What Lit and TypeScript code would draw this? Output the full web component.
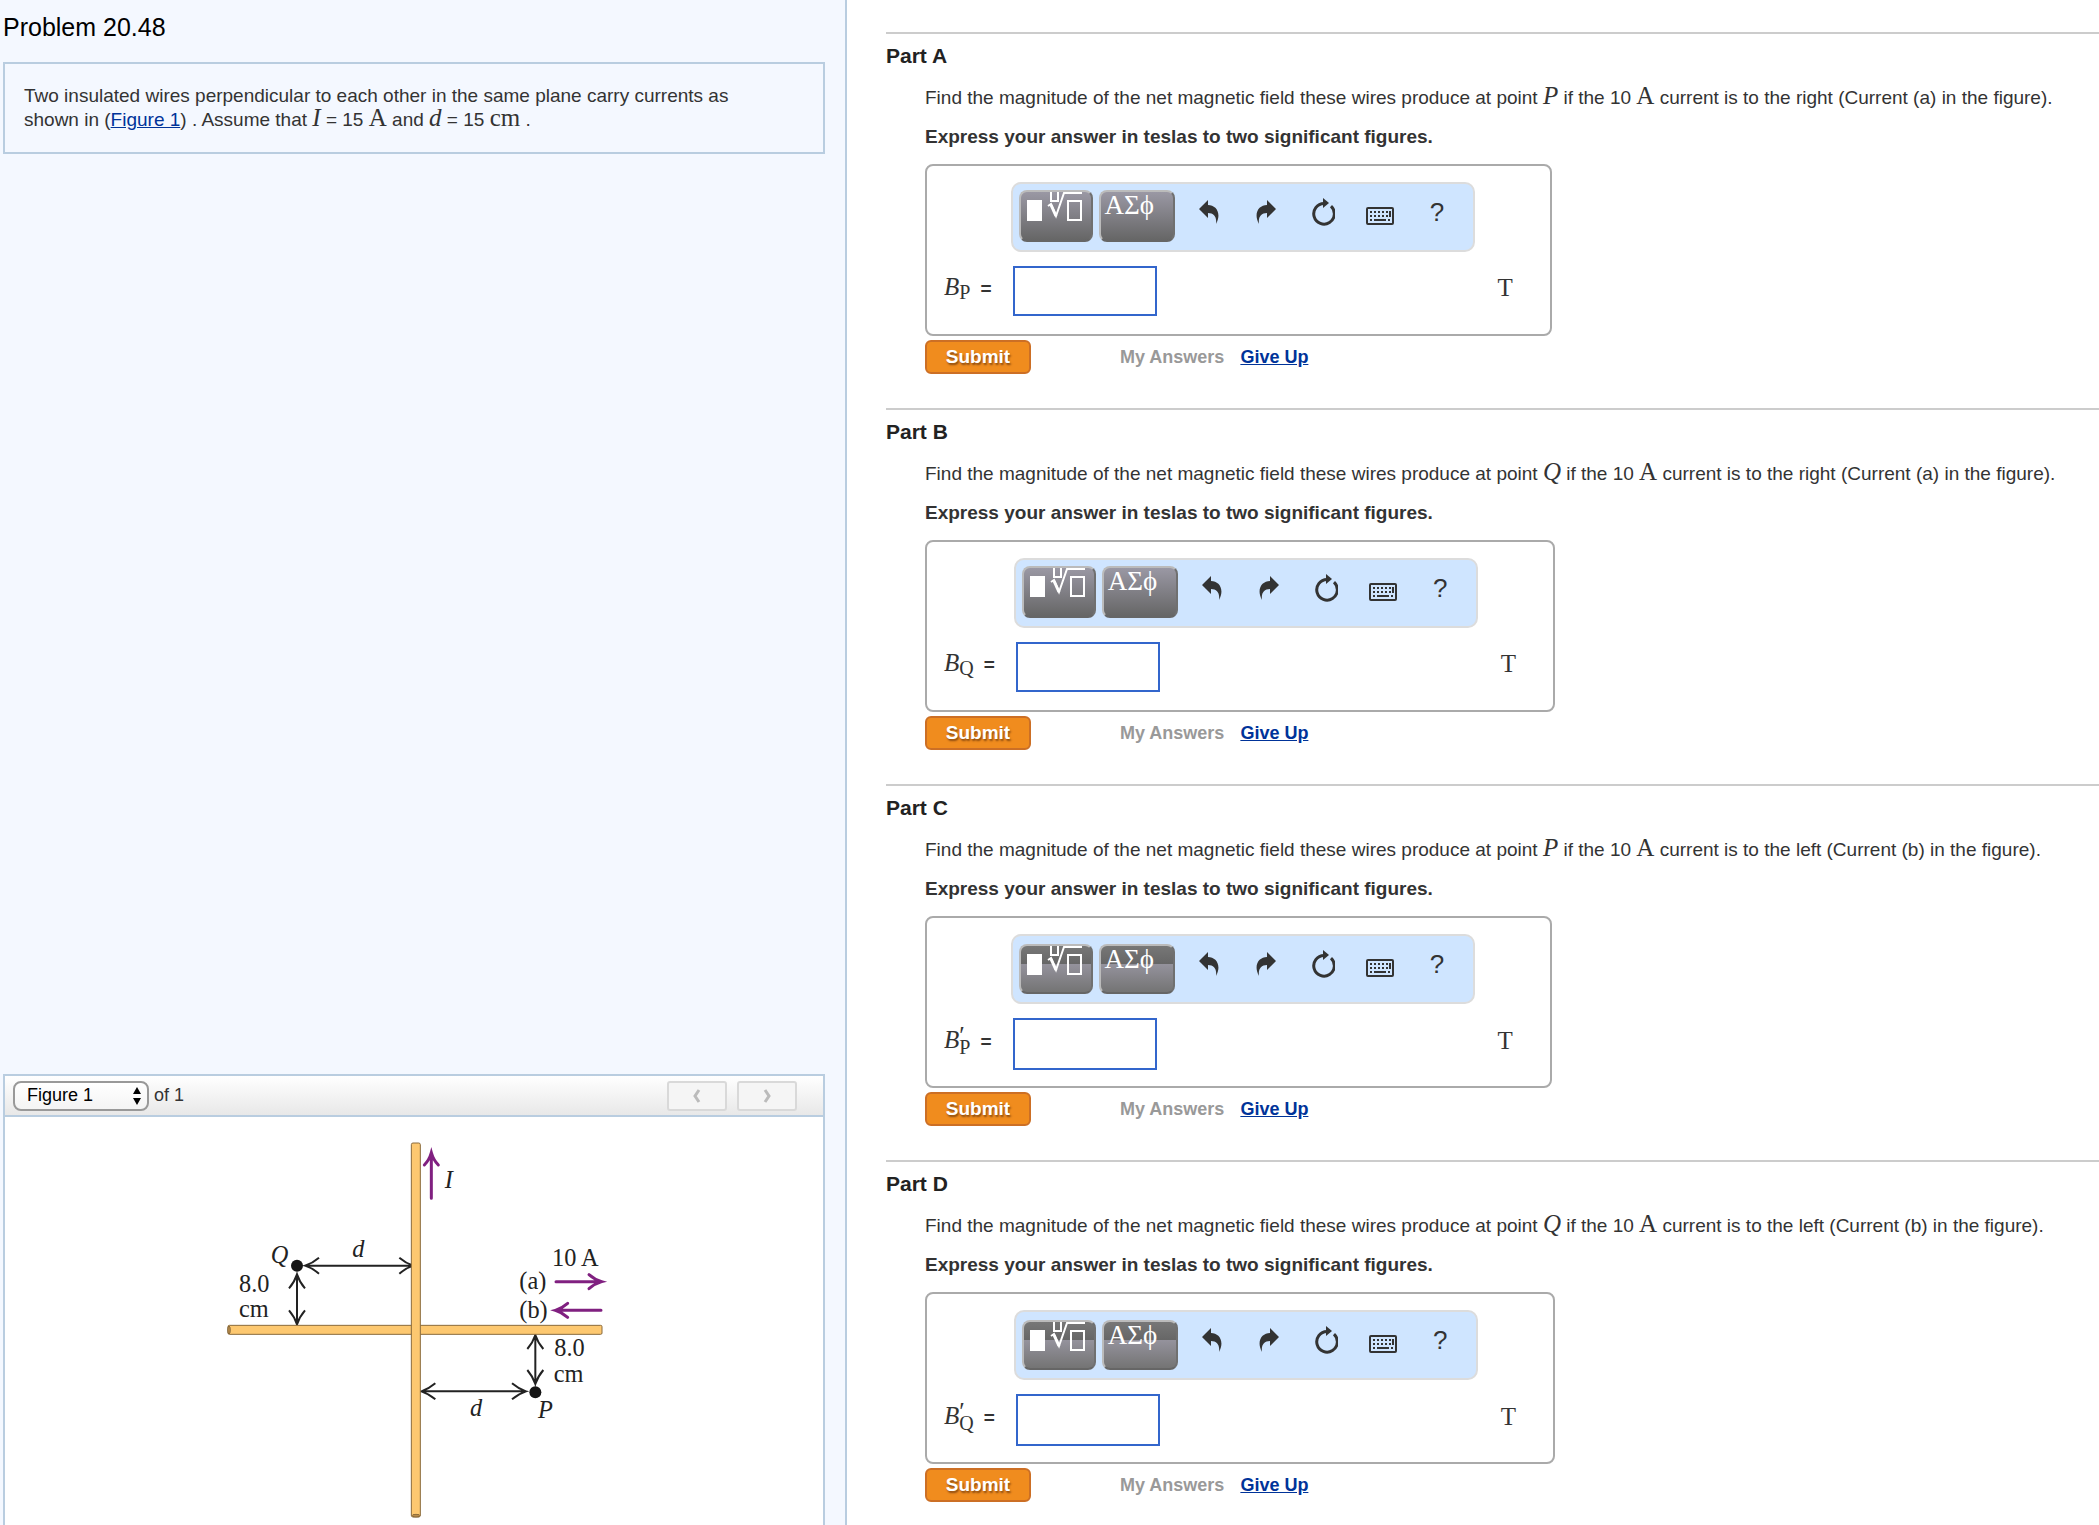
import { LitElement, html, svg, css } from "lit";
import { customElement, property } from "lit/decorators.js";
import { classMap } from "lit/directives/class-map.js";

interface Part {
  id: string;
  point: string;
  prime: boolean;
  direction: string;
  current: string;
}

const PARTS: Part[] = [
  { id: "A", point: "P", prime: false, direction: "right", current: "a" },
  { id: "B", point: "Q", prime: false, direction: "right", current: "a" },
  { id: "C", point: "P", prime: true, direction: "left", current: "b" },
  { id: "D", point: "Q", prime: true, direction: "left", current: "b" },
];

const templatesIcon = html`<svg class="glyph" viewBox="0 0 74 46" width="74" height="46" aria-hidden="true">
  <g transform="translate(0 -2)">
    <rect x="8" y="10" width="15" height="21" fill="#fff" />
    <path d="M32 2V11H39V2M29 16L32 14L37 26L45 3H63" fill="none" stroke="#fff" stroke-width="2" />
    <path d="M32 15L37 26" stroke="#fff" stroke-width="3" />
    <rect x="49" y="11" width="13" height="19" fill="none" stroke="#fff" stroke-width="2" />
  </g>
</svg>`;

const undoIcon = html`<svg viewBox="0 0 24 28" width="24" height="28" aria-hidden="true">
  <path d="M2 11L11 2V7C19 7 25 15 19 26C20 19 17 15 11 15V20Z" fill="#333" />
</svg>`;

const redoIcon = html`<svg viewBox="0 0 24 28" width="24" height="28" aria-hidden="true">
  <path d="M22 11L13 2V7C5 7 -1 15 5 26C4 19 7 15 13 15V20Z" fill="#333" />
</svg>`;

const resetIcon = html`<svg viewBox="0 0 24 28" width="24" height="28" aria-hidden="true">
  <path d="M20 8.200A10.300 10.300 0 1 1 13 5.500" fill="none" stroke="#333" stroke-width="3" />
  <path d="M12 0L18 5L12 10Z" fill="#333" />
</svg>`;

const keyboardIcon = html`<svg viewBox="0 0 28 28" width="28" height="28" aria-hidden="true">
  <rect x="1" y="10" width="26" height="16" rx="1" fill="none" stroke="#333" stroke-width="2" />
  <path d="M4 14H24M4 18H22" fill="none" stroke="#333" stroke-width="2" stroke-dasharray="2 2" />
  <path d="M24 13V19M4 22H6M8 22H20M22 22H24" fill="none" stroke="#333" stroke-width="2" />
</svg>`;

@customElement("answer-part")
class AnswerPart extends LitElement {
  @property({ attribute: false }) part!: Part;

  static styles = css`
    :host {
      display: block;
      border-top: 2px solid #ccc;
      padding: 10px 0 34px;
      color: #333;
    }
    .title {
      margin: 0 0 18px;
      font-size: 21px;
      line-height: 24px;
      color: #222;
    }
    .body {
      padding-left: 39px;
    }
    .text {
      margin: 0 0 15px;
      font-size: 19px;
      line-height: 24px;
    }
    .instruction {
      margin: 0 0 15px;
      font-size: 19px;
      line-height: 24px;
      font-weight: bold;
    }
    .math {
      font-family: "Liberation Serif", serif;
      font-size: 25px;
      line-height: 20px;
    }
    .italic {
      font-style: italic;
    }
    .answer {
      display: grid;
      grid-template-columns: auto auto auto;
      width: fit-content;
      row-gap: 14px;
      align-items: center;
      border: 2px solid #aaa;
      border-radius: 8px;
      padding: 16px 37px 18px 17px;
    }
    .answer.primed {
      padding-bottom: 16px;
    }
    .toolbar {
      grid-column: 2;
      display: flex;
      align-items: flex-start;
      box-sizing: border-box;
      height: 70px;
      width: 464px;
      padding: 6px 6px 0;
      background: #cfe5ff;
      border: 2px solid #dcdcdc;
      border-radius: 10px;
    }
    .palette {
      box-sizing: border-box;
      width: 74px;
      height: 52px;
      margin: 0 6px 0 0;
      padding: 0;
      border: 2px solid;
      border-color: #bbb #707070 #666 #bbb;
      border-radius: 8px;
      background: linear-gradient(#9a98a4, #666);
      color: #fff;
      overflow: hidden;
      display: flex;
      align-items: flex-start;
    }
    .greek {
      width: 76px;
      padding-left: 4px;
      font-family: "Liberation Serif", serif;
      font-size: 27px;
      line-height: 26px;
    }
    .primed .palette {
      height: 50px;
      margin-top: 2px;
      background: linear-gradient(#777 0, #666 40%, #94929c 40%, #747474);
    }
    .glyph {
      flex: none;
      margin-left: -2px;
    }
    .tool {
      width: 57px;
      height: 44px;
      padding: 0;
      border: 0;
      background: none;
      color: #333;
      display: flex;
      align-items: center;
      justify-content: center;
      font-family: "Liberation Sans", Arial, sans-serif;
      font-size: 26px;
    }
    .label {
      grid-column: 1;
      padding: 0 19px 4px 0;
      white-space: nowrap;
      font-size: 19px;
      line-height: 24px;
    }
    .sub {
      font-family: "Liberation Serif", serif;
      font-size: 20px;
      line-height: 12px;
      vertical-align: -4px;
    }
    .primed .sub {
      vertical-align: -6px;
    }
    .prime {
      display: inline-block;
      width: 0;
      font-family: "Liberation Serif", serif;
      font-size: 25px;
      line-height: 12px;
      vertical-align: 4px;
    }
    .equals {
      font-weight: bold;
      margin-left: 10px;
    }
    .field {
      box-sizing: border-box;
      width: 144px;
      height: 50px;
      margin: 0 0 0 2px;
      padding: 0 8px;
      border: 2px solid #36c;
      border-radius: 0;
      background: #fff;
      font-size: 22px;
    }
    .primed .field {
      height: 52px;
    }
    .unit {
      padding: 0 0 6px 23px;
      line-height: 24px;
    }
    .actions {
      display: flex;
      align-items: center;
      margin-top: 4px;
      font-size: 18px;
      line-height: 20px;
      font-weight: bold;
    }
    .submit {
      box-sizing: border-box;
      width: 106px;
      height: 34px;
      margin-right: 89px;
      padding: 0;
      border: 2px solid #cc6f25;
      border-radius: 6px;
      background: #f08c1e;
      color: #fff;
      font-family: "Liberation Sans", Arial, sans-serif;
      font-size: 19px;
      font-weight: bold;
      text-shadow: 1px 2px 2px #8a4a10;
    }
    .muted {
      color: #999;
      margin-right: 16px;
    }
    .link {
      color: #039;
    }
  `;

  render() {
    const { id, point, prime, direction, current } = this.part;
    return html`
      <h2 class="title">Part ${id}</h2>
      <div class="body">
        <p class="text">
          Find the magnitude of the net magnetic field these wires produce at point
          <span class="math italic">${point}</span> if the 10 <span class="math">A</span> current is
          to the ${direction} (Current (${current}) in the figure).
        </p>
        <p class="instruction">Express your answer in teslas to two significant figures.</p>
        <div class=${classMap({ answer: true, primed: prime })}>
          <div class="toolbar" role="toolbar" aria-label="Equation tools">
            <button class="palette" type="button" aria-label="Templates">${templatesIcon}</button>
            <button class="palette greek" type="button">ΑΣϕ</button>
            <button class="tool" type="button" aria-label="Undo">${undoIcon}</button>
            <button class="tool" type="button" aria-label="Redo">${redoIcon}</button>
            <button class="tool" type="button" aria-label="Reset">${resetIcon}</button>
            <button class="tool" type="button" aria-label="Keyboard shortcuts">${keyboardIcon}</button>
            <button class="tool" type="button">?</button>
          </div>
          <label class="label" for="value"
            ><span class="math italic">B</span>${prime ? html`<span class="prime">′</span>` : ""}<span
              class="sub"
              >${point}</span
            ><span class="equals">=</span></label
          >
          <input class="field" id="value" type="text" autocomplete="off" />
          <span class="unit math">T</span>
        </div>
        <div class="actions">
          <button class="submit" type="button">Submit</button>
          <span class="muted">My Answers</span>
          <a class="link" href="#give-up">Give Up</a>
        </div>
      </div>
    `;
  }
}

/* Double-headed dimension line with open arrowheads. */
const dimension = (x1: number, y1: number, x2: number, y2: number) => {
  const across = y1 === y2;
  const heads = across
    ? `M${x1 + 42} ${y1 - 24}Q${x1 + 22} ${y1 - 7} ${x1} ${y1}Q${x1 + 22} ${y1 + 7} ${x1 + 42} ${y1 + 24}
       M${x2 - 42} ${y1 - 24}Q${x2 - 22} ${y1 - 7} ${x2} ${y1}Q${x2 - 22} ${y1 + 7} ${x2 - 42} ${y1 + 24}`
    : `M${x1 - 24} ${y1 + 42}Q${x1 - 7} ${y1 + 22} ${x1} ${y1}Q${x1 + 7} ${y1 + 22} ${x1 + 24} ${y1 + 42}
       M${x1 - 24} ${y2 - 42}Q${x1 - 7} ${y2 - 22} ${x1} ${y2}Q${x1 + 7} ${y2 - 22} ${x1 + 24} ${y2 - 42}`;
  return svg`<path class="dim" d="M${x1} ${y1}L${x2} ${y2}${heads}" />`;
};

@customElement("wire-figure")
class WireFigure extends LitElement {
  static styles = css`
    :host {
      display: block;
    }
    .drawing {
      display: block;
      margin: 0 auto;
    }
    .dim {
      fill: none;
      stroke: #222;
      stroke-width: 6;
    }
    .wire {
      fill: #fdc870;
      stroke: #8a6a3c;
      stroke-width: 3;
    }
    .end {
      fill: #b98d4b;
      stroke: #6e532c;
      stroke-width: 2;
    }
    .current {
      fill: none;
      stroke: #802080;
      stroke-width: 9;
      stroke-linecap: round;
    }
    .words {
      font-family: "Liberation Serif", serif;
      font-size: 73px;
      fill: #222;
    }
    .italic {
      font-style: italic;
    }
  `;

  render() {
    return html`<svg class="drawing" viewBox="-3 0 1290 1185" width="430" height="395" role="img" aria-label="Two perpendicular wires">
      ${dimension(315, 407, 640, 407)} ${dimension(664, 784, 978, 784)}
      ${dimension(291, 433, 291, 583)} ${dimension(1006, 615, 1006, 762)}
      <rect class="wire" x="84" y="586" width="1122" height="27" rx="4" />
      <ellipse class="end" cx="87" cy="600" rx="4" ry="12" />
      <rect class="wire" x="634" y="39" width="27" height="1122" rx="5" />
      <ellipse class="end" cx="648" cy="1157" rx="12" ry="4" />
      <circle cx="291" cy="407" r="18" fill="#151515" />
      <circle cx="1006" cy="787" r="18" fill="#151515" />
      <path class="current" d="M694 205V70M673 105Q688 90 694 68Q700 90 715 105" />
      <path class="current" d="M1068 455H1202M1167 434Q1184 449 1205 455Q1184 461 1167 476" />
      <path class="current" d="M1203 541H1068M1103 520Q1086 535 1066 541Q1086 547 1103 562" />
      <g class="words">
        <text x="117" y="485">8.0</text>
        <text x="117" y="561">cm</text>
        <text x="1056" y="408">10 A</text>
        <text x="958" y="478">(a)</text>
        <text x="958" y="564">(b)</text>
        <text x="1063" y="678">8.0</text>
        <text x="1061" y="756">cm</text>
        <g class="italic">
          <text x="734" y="174">I</text>
          <text x="212" y="398">Q</text>
          <text x="457" y="380">d</text>
          <text x="810" y="857">d</text>
          <text x="1014" y="864">P</text>
        </g>
      </g>
    </svg>`;
  }
}

@customElement("app-root")
class AppRoot extends LitElement {
  static styles = css`
    :host {
      display: grid;
      grid-template-columns: 847px minmax(0, 1fr);
      grid-template-rows: minmax(0, 1fr);
      height: 100vh;
      overflow: hidden;
      background: #fff;
      color: #333;
      font-family: "Liberation Sans", Arial, sans-serif;
    }
    .side {
      box-sizing: border-box;
      min-height: 0;
      display: flex;
      flex-direction: column;
      justify-content: space-between;
      padding: 12px 20px 0 3px;
      background: #f4f8ff;
      border-right: 2px solid #b9cde0;
    }
    .heading {
      margin: 0 0 20px;
      font-size: 25px;
      line-height: 30px;
      font-weight: normal;
      color: #000;
    }
    .statement {
      margin: 0;
      padding: 20px 38px 20px 19px;
      border: 2px solid #b9cde0;
      font-size: 19px;
      line-height: 24px;
    }
    .math {
      font-family: "Liberation Serif", serif;
      font-size: 25px;
      line-height: 20px;
    }
    .italic {
      font-style: italic;
    }
    .link {
      color: #039;
    }
    .figure {
      border: 2px solid #b9cde0;
      border-bottom: 0;
      background: #fff;
    }
    .bar {
      display: flex;
      align-items: center;
      box-sizing: border-box;
      height: 41px;
      padding: 0 26px 0 8px;
      border-bottom: 2px solid #b9cde0;
      background: linear-gradient(#fff, #e8e8e8);
      font-size: 18px;
    }
    .chooser {
      display: grid;
      align-items: center;
      justify-items: end;
      margin-right: 5px;
    }
    .select {
      grid-area: 1 / 1;
      appearance: none;
      box-sizing: border-box;
      width: 136px;
      height: 30px;
      margin: 0;
      padding: 0 12px 2px;
      border: 2px solid #999;
      border-radius: 8px;
      background: linear-gradient(#fff, #f4f4f4);
      color: #000;
      font-family: "Liberation Sans", Arial, sans-serif;
      font-size: 18px;
    }
    .arrows {
      grid-area: 1 / 1;
      margin-right: 8px;
      pointer-events: none;
    }
    .count {
      flex: 1;
    }
    .step {
      box-sizing: border-box;
      width: 60px;
      height: 30px;
      margin-left: 10px;
      padding: 0;
      border: 2px solid #d9d9d9;
      border-radius: 3px;
      background: #f5f5f5;
      display: grid;
      place-items: center;
    }
    .canvas {
      padding-top: 13px;
    }
    .main {
      padding: 32px 0 0 39px;
    }
  `;

  render() {
    return html`
      <aside class="side">
        <section>
          <h1 class="heading">Problem 20.48</h1>
          <p class="statement">
            Two insulated wires perpendicular to each other in the same plane carry currents as
            shown in (<a class="link" href="#figure">Figure 1</a>) . Assume that
            <span class="math italic">I</span> = 15 <span class="math">A</span> and
            <span class="math italic">d</span> = 15 <span class="math">cm</span> .
          </p>
        </section>
        <section class="figure" id="figure">
          <div class="bar">
            <span class="chooser">
              <select class="select" aria-label="Figure">
                <option>Figure 1</option>
              </select>
              <svg class="arrows" viewBox="0 0 8 18" width="8" height="18" aria-hidden="true">
                <path d="M0 7L4 0L8 7ZM0 11L4 18L8 11Z" fill="#000" />
              </svg>
            </span>
            <span class="count">of 1</span>
            <button class="step" type="button" aria-label="Previous figure">
              <svg viewBox="0 0 10 14" width="10" height="14" aria-hidden="true">
                <path d="M7 1L3 7L7 13" fill="none" stroke="#bbb" stroke-width="3" />
              </svg>
            </button>
            <button class="step" type="button" aria-label="Next figure">
              <svg viewBox="0 0 10 14" width="10" height="14" aria-hidden="true">
                <path d="M3 1L7 7L3 13" fill="none" stroke="#bbb" stroke-width="3" />
              </svg>
            </button>
          </div>
          <div class="canvas"><wire-figure></wire-figure></div>
        </section>
      </aside>
      <main class="main">
        ${PARTS.map((part) => html`<answer-part .part=${part}></answer-part>`)}
      </main>
    `;
  }
}
